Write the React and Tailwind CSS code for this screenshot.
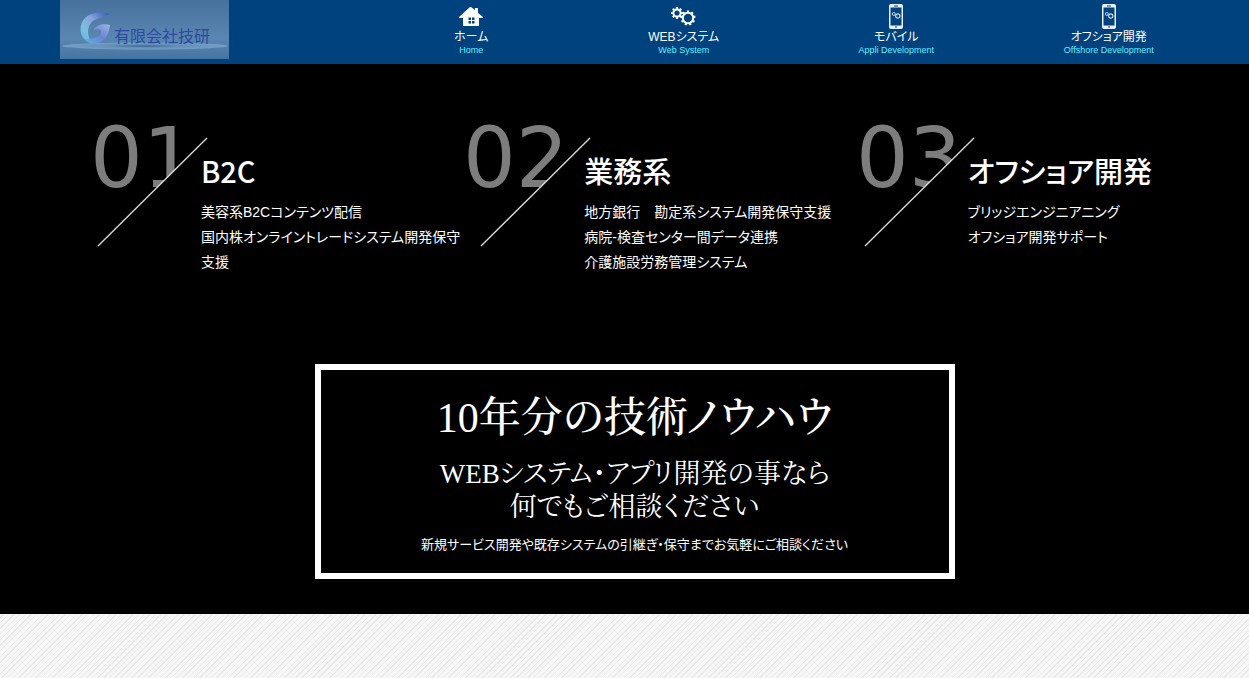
import React from "react";

const NAV = [
  { label: "ホーム", sub: "Home", icon: "home" },
  { label: "WEBシステム", sub: "Web System", icon: "gears" },
  { label: "モバイル", sub: "Appli Development", icon: "phone" },
  { label: "オフショア開発", sub: "Offshore Development", icon: "phone" },
];

const FEATURES = [
  { no: "01", x: 5, title: "B2C", items: ["美容系B2Cコンテンツ配信", "国内株オンライントレードシステム開発保守支援"] },
  {
    no: "02",
    x: -5,
    title: "業務系",
    items: ["地方銀行　勘定系システム開発保守支援", "病院-検査センター間データ連携", "介護施設労務管理システム"],
  },
  { no: "03", x: 4, title: "オフショア開発", items: ["ブリッジエンジニアニング", "オフショア開発サポート"] },
];

function Logo() {
  return (
    <svg width="169" height="59" viewBox="0 0 169 59" role="img" aria-label="有限会社技研">
      <defs>
        <linearGradient id="logoBg" x1="0" y1="0" x2="0" y2="1">
          <stop offset="0" stopColor="#47719d" />
          <stop offset="0.65" stopColor="#5a86b2" />
          <stop offset="1" stopColor="#4674a2" />
        </linearGradient>
        <linearGradient id="logoArc" x1="1" y1="0" x2="0" y2="1">
          <stop offset="0" stopColor="#2f55b8" />
          <stop offset="0.4" stopColor="#86a4da" />
          <stop offset="0.7" stopColor="#7cc0e0" />
          <stop offset="1" stopColor="#5ab4e0" />
        </linearGradient>
        <linearGradient id="logoTail" x1="1" y1="0" x2="0" y2="1">
          <stop offset="0" stopColor="#9ab8e6" />
          <stop offset="0.5" stopColor="#6a83d4" />
          <stop offset="1" stopColor="#5ab8e4" />
        </linearGradient>
        <radialGradient id="logoDisc">
          <stop offset="0" stopColor="#3b6692" />
          <stop offset="0.45" stopColor="#6590ba" />
          <stop offset="1" stopColor="#769fc6" />
        </radialGradient>
      </defs>
      <rect width="169" height="59" fill="url(#logoBg)" />
      <ellipse cx="85" cy="46" rx="83" ry="3.5" fill="url(#logoDisc)" />
      <path d="M50 14C41 12 31 12 25 18C19 24 19 35 25 40C27 42 30 43 32 43C27 36 27 28 31 23C35 18 43 18 50 14Z" fill="url(#logoArc)" />
      <path d="M50 25C43 23 35 25 33 31C37 28 42 29 41 33C40 37 33 39 25 39C28 43 33 45 38 43C46 41 49 33 50 25Z" fill="url(#logoTail)" />
      <text x="54" y="42" fontSize="16" fill="#2c4aa0" fontFamily="'Noto Sans CJK JP', sans-serif">
        有限会社技研
      </text>
    </svg>
  );
}

function Gear({ cx, cy, r, teeth }) {
  return (
    <g stroke="#fff" fill="none">
      <circle cx={cx} cy={cy} r={r} strokeWidth="2" />
      {Array.from({ length: teeth }, (_, i) => (
        <path
          key={i}
          d={`M${cx} ${cy - r - 0.5}v-1.8`}
          strokeWidth="2.2"
          transform={`rotate(${(360 / teeth) * i} ${cx} ${cy})`}
        />
      ))}
    </g>
  );
}

function NavIcon({ name }) {
  if (name === "home") {
    return (
      <svg width="24" height="19" viewBox="0 0 24 19" aria-hidden="true">
        <path d="M11 0H12L16 3V1H19V6L24 10V11H20V19H4V11H0V10Z" fill="#fff" />
        <path d="M9.5 10.5h2.5v2.5h-2.5zM13 10.5h2.5v2.5h-2.5zM9.5 14h2.5v2.5h-2.5zM13 14h2.5v2.5h-2.5z" fill="#00427e" />
      </svg>
    );
  }
  if (name === "gears") {
    return (
      <svg width="26" height="19" viewBox="0 0 26 19" aria-hidden="true">
        <Gear cx={6} cy={6} r={3.6} teeth={8} />
        <Gear cx={17} cy={11} r={5.2} teeth={9} />
      </svg>
    );
  }
  return (
    <svg width="14" height="25" viewBox="0 0 14 25" aria-hidden="true">
      <rect width="14" height="25" rx="2" fill="#e8eff6" />
      <rect x="1.5" y="3.5" width="11" height="18" fill="#00427e" />
      <path d="M5 2h4M6 23h2" stroke="#00427e" />
      <circle cx="4.8" cy="10" r="1.5" fill="none" stroke="#c5d5e5" />
      <circle cx="8.8" cy="12" r="2.1" fill="none" stroke="#c5d5e5" strokeWidth="1.2" />
    </svg>
  );
}

function Header() {
  return (
    <header className="flex h-16 items-start bg-[#00427e] pr-[34px] pl-15">
      <a href="#top" className="shrink-0">
        <Logo />
      </a>
      <nav className="ml-[136px] flex-1">
        <ul className="grid grid-cols-4">
          {NAV.map((item) => (
            <li key={item.label}>
              <a href="#" className="flex flex-col items-center whitespace-nowrap text-white">
                <span className="flex h-7 items-center pt-1">
                  <NavIcon name={item.icon} />
                </span>
                <span className="text-xs leading-[18px]">{item.label}</span>
                <span className="text-[9px] leading-2 text-[#66eeff]">{item.sub}</span>
              </a>
            </li>
          ))}
        </ul>
      </nav>
    </header>
  );
}

function Feature({ feature }) {
  return (
    <section className="flex">
      {/* the slash hides the lower right part of the number */}
      <svg className="shrink-0 overflow-visible" width="116" height="130" viewBox="0 0 116 130" role="img" aria-label={feature.no}>
        <text x={feature.x} y="67" fontSize="83" fill="#7d7d7d" fontFamily="'DejaVu Sans', sans-serif">
          {feature.no}
        </text>
        <path d="M13 126L114 26V130H13Z" fill="#000" />
        <path d="M13 126L122 18" stroke="#ddd" strokeWidth="1.3" />
      </svg>
      <div className="pt-[30px] pr-1">
        <h2 className="font-['Noto_Sans_CJK_JP',sans-serif] text-[29px] leading-10 font-medium whitespace-nowrap">
          {feature.title}
        </h2>
        <ul className="pt-[10px] text-sm leading-[25px]">
          {feature.items.map((text) => (
            <li key={text}>{text}</li>
          ))}
        </ul>
      </div>
    </section>
  );
}

export default function App() {
  return (
    <div
      id="top"
      className="min-h-screen bg-[#f5f5f5] bg-[repeating-linear-gradient(135deg,#e8e8e8_0px,#e8e8e8_1px,#f7f7f7_1px,#f7f7f7_4px)] font-['Liberation_Sans','Noto_Sans_CJK_JP',sans-serif] [font-feature-settings:'palt']"
    >
      <Header />
      <main className="bg-black pt-14 pb-[35px] text-white">
        <div className="grid grid-cols-3 pr-[14px] pl-[85px]">
          {FEATURES.map((feature) => (
            <Feature key={feature.no} feature={feature} />
          ))}
        </div>
        <div className="mt-[89px] pr-10 pl-15">
          <section className="mx-auto max-w-[640px] border-6 border-white px-6 pt-[21px] pb-4 text-center">
            <h2 className="font-['Liberation_Serif','Noto_Serif_CJK_JP','Noto_Sans_CJK_JP',serif] text-[42px] leading-[54px] font-medium">
              10年分の技術ノウハウ
            </h2>
            <p className="pt-[13px] font-['Liberation_Serif','Noto_Serif_CJK_JP','Noto_Sans_CJK_JP',serif] text-[27px] leading-[33px] font-normal">
              WEBシステム・アプリ開発の事なら
              <br />
              何でもご相談ください
            </p>
            <p className="pt-[9px] text-[13px] leading-6">新規サービス開発や既存システムの引継ぎ・保守までお気軽にご相談ください</p>
          </section>
        </div>
      </main>
    </div>
  );
}
